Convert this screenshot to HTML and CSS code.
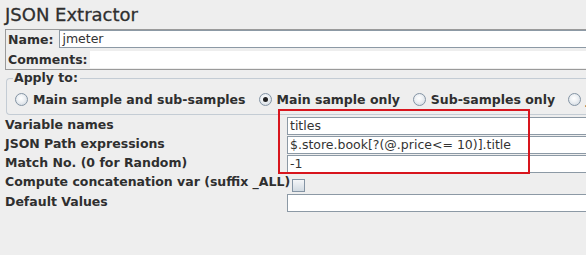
FILE: index.html
```html
<!DOCTYPE html>
<html>
<head>
<meta charset="utf-8">
<link rel="stylesheet" href="styles.css">
</head>
<body>
<div class="page">
  <h1 class="title">JSON Extractor</h1>
  <div class="name-panel">
    <div class="np-row">
      <span class="lbl np-lbl">Name:</span>
      <div class="field">jmeter</div>
    </div>
    <div class="np-row">
      <span class="lbl np-lbl">Comments:</span>
      <div class="field plain"></div>
    </div>
  </div>
  <fieldset class="apply">
    <legend class="lbl">Apply to:</legend>
    <div class="radios">
      <span class="radio"><span class="dot"></span><span class="lbl">Main sample and sub-samples</span></span>
      <span class="radio on"><span class="dot"></span><span class="lbl">Main sample only</span></span>
      <span class="radio"><span class="dot"></span><span class="lbl">Sub-samples only</span></span>
      <span class="radio"><span class="dot"></span><span class="lbl">JMeter Variable Name to use</span></span>
    </div>
  </fieldset>
  <div class="form">
    <span class="lbl">Variable names</span>
    <div class="field">titles</div>
    <span class="lbl">JSON Path expressions</span>
    <div class="field">$.store.book[?(@.price&lt;= 10)].title</div>
    <span class="lbl">Match No. (0 for Random)</span>
    <div class="field">-1</div>
    <span class="lbl">Compute concatenation var (suffix _ALL)</span>
    <div class="check-cell"><span class="check"></span></div>
    <span class="lbl">Default Values</span>
    <div class="field"></div>
  </div>
  <div class="highlight"></div>
</div>
</body>
</html>
```
FILE: styles.css
```css
html, body {
  margin: 0;
  padding: 0;
  background: #eeeeee;
  overflow: hidden;
}
body {
  width: 586px;
  height: 255px;
  font-family: "DejaVu Sans", sans-serif;
  color: #2f2f2f;
}
.page {
  position: relative;
  width: 586px;
  height: 255px;
  overflow: hidden;
}
.title {
  margin: 0;
  padding: 3px 0 0 5px;
  height: 24px;
  font-size: 18px;
  font-weight: normal;
  line-height: 24px;
  color: #2f2f2f;
  -webkit-text-stroke: 0.3px #2f2f2f;
}
.lbl {
  font-size: 12.5px;
  font-weight: bold;
  color: #2f2f2f;
  white-space: nowrap;
}
.name-panel {
  margin: 2px -30px 0 5px;
  border: 1px solid #9a9a9a;
  border-right: none;
  padding: 0 0 1px 1px;
  display: flex;
  flex-direction: column;
  gap: 3px;
}
.np-row {
  display: flex;
  align-items: center;
  height: 18px;
}
.np-row + .np-row {
  height: 17px;
}
.np-lbl {
  padding-left: 1px;
}
.np-row .field {
  flex: 1;
  margin-left: 6px;
}
.np-row .field.plain {
  margin-left: 2px;
  border: none;
  height: 17px;
}
.field {
  box-sizing: border-box;
  height: 18px;
  background: #ffffff;
  border: 1px solid #8c99a5;
  border-right: none;
  font-size: 12.5px;
  line-height: 16px;
  padding-left: 2px;
  color: #333333;
  white-space: nowrap;
  overflow: hidden;
}
.apply {
  margin: 1px -20px 0 6px;
  padding: 6px 0 7px 8px;
  border: 1px solid #c4ccd4;
  border-radius: 4px;
  border-right: none;
  min-width: 0;
}
.apply legend {
  margin-left: -2px;
  padding: 0 2px 0 1px;
  line-height: 14px;
}
.radios {
  display: flex;
  align-items: center;
  height: 16px;
  white-space: nowrap;
}
.radio {
  display: flex;
  align-items: center;
  gap: 5px;
  margin-right: 13px;
  flex: none;
}
.dot {
  box-sizing: border-box;
  width: 13px;
  height: 13px;
  border-radius: 50%;
  border: 1px solid #8494a4;
  background: radial-gradient(circle at 45% 40%, #ffffff 0%, #eef1f4 40%, #c9d2db 100%);
  display: flex;
  align-items: center;
  justify-content: center;
}
.radio.on .dot::after {
  content: "";
  width: 5px;
  height: 5px;
  border-radius: 50%;
  background: #222222;
}
.form {
  margin: 2px -20px 0 5px;
  display: grid;
  grid-template-columns: 282px 1fr;
  grid-auto-rows: 18px;
  row-gap: 1px;
  align-items: center;
}
.form .lbl {
  align-self: start;
  line-height: 15px;
}
.check-cell {
  display: flex;
  align-items: flex-end;
  height: 18px;
  padding-left: 5px;
}
.check {
  box-sizing: border-box;
  width: 13px;
  height: 13px;
  border: 1px solid #8494a4;
  background: linear-gradient(#f4f6f8, #d2dae2);
}
.form .check-cell + .lbl {
  margin-top: 1px;
}
.form .check-cell + .lbl + .field {
  margin-top: 1px;
}
.highlight {
  position: absolute;
  left: 278px;
  top: 109px;
  width: 252px;
  height: 65px;
  box-sizing: border-box;
  border: 2px solid #d8151d;
}
```
